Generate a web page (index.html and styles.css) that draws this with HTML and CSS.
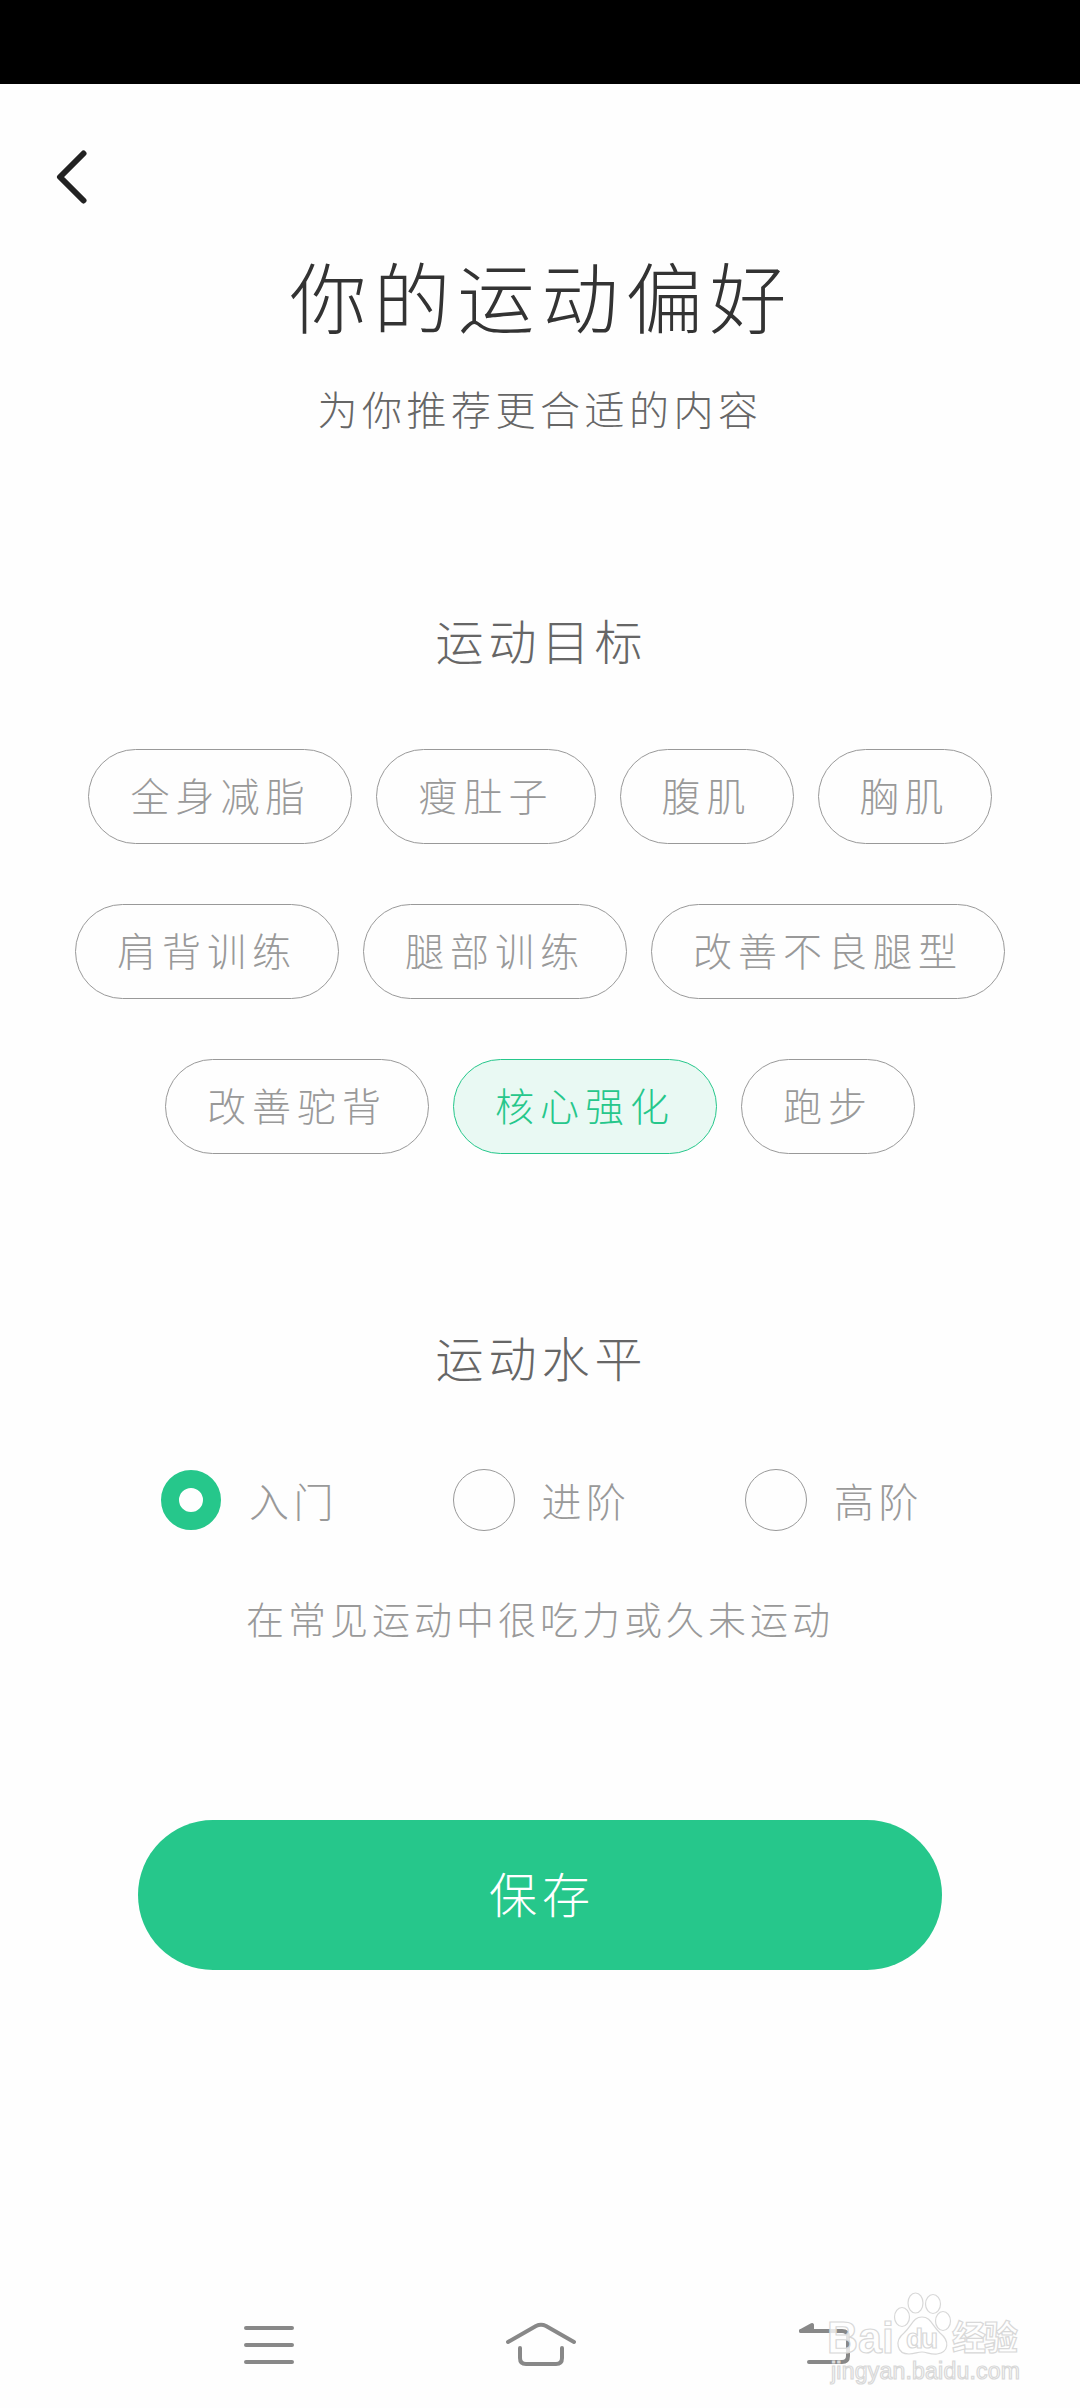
FILE: index.html
```html
<!DOCTYPE html>
<html lang="zh-CN">
<head>
  <meta charset="UTF-8">
  <meta name="viewport" content="width=device-width, initial-scale=1.0">
  <title>你的运动偏好</title>
  <link rel="stylesheet" href="styles.css">
</head>
<body>
  <div class="status-bar"></div>
  <header class="top-bar">
    <button class="back" aria-label="返回">
      <svg width="32" height="56" viewBox="0 0 32 56">
        <path d="M27.5 4.5 L4 28 L27.5 51.5" fill="none" stroke="#222" stroke-width="6" stroke-linecap="round" stroke-linejoin="round"/>
      </svg>
    </button>
  </header>

  <main>
    <h1>你的运动偏好</h1>
    <p class="subtitle">为你推荐更合适的内容</p>

    <h2 class="goal-title">运动目标</h2>
    <div class="chips">
      <div class="chip-row">
        <button class="chip">全身减脂</button>
        <button class="chip">瘦肚子</button>
        <button class="chip">腹肌</button>
        <button class="chip">胸肌</button>
      </div>
      <div class="chip-row">
        <button class="chip">肩背训练</button>
        <button class="chip">腿部训练</button>
        <button class="chip">改善不良腿型</button>
      </div>
      <div class="chip-row">
        <button class="chip">改善驼背</button>
        <button class="chip active">核心强化</button>
        <button class="chip">跑步</button>
      </div>
    </div>

    <h2 class="level-title">运动水平</h2>
    <div class="levels">
      <div class="level"><span class="radio checked"></span><span>入门</span></div>
      <div class="level"><span class="radio"></span><span>进阶</span></div>
      <div class="level"><span class="radio"></span><span>高阶</span></div>
    </div>
    <p class="hint">在常见运动中很吃力或久未运动</p>

    <button class="save">保存</button>
  </main>

  <nav class="nav-bar">
    <svg width="54" height="46" viewBox="0 0 54 46">
      <path d="M4 6H50M4 23H50M4 40H50"/>
    </svg>
    <svg width="74" height="46" viewBox="0 0 74 46">
      <path d="M4 20 L32 4 Q37 1.5 42 4 L70 20"/>
      <path d="M16 26V36Q16 42 22 42H52Q58 42 58 36V26"/>
    </svg>
    <svg width="54" height="46" viewBox="0 0 54 46">
      <path d="M4 9H45Q51 9 51 15V34Q51 40 45 40H12"/>
      <path class="solid" d="M4 9L15 3V9Z"/>
    </svg>
  </nav>

  <svg class="watermark" width="210" height="100" viewBox="0 0 210 100">
    <g class="mark">
      <text class="logo" x="5" y="63" textLength="67" lengthAdjust="spacingAndGlyphs">Bai</text>
      <ellipse cx="80" cy="27" rx="7.5" ry="9.5"/>
      <ellipse cx="93.5" cy="13" rx="7.5" ry="10"/>
      <ellipse cx="111" cy="14" rx="7.5" ry="9.5"/>
      <ellipse cx="121" cy="31" rx="7.5" ry="9.5"/>
      <path d="M100 27C91 27 90 36 82 43C72 51 75 64 87 64C93 64 95 62 100 62C105 62 109 65 115 64C127 62 128 51 118 43C110 36 109 27 100 27Z"/>
      <text class="du" x="84" y="58" textLength="32">du</text>
      <text class="cn" x="130" y="60" textLength="66">经验</text>
      <text class="url" x="9" y="89" textLength="189">jingyan.baidu.com</text>
    </g>
  </svg>
</body>
</html>
```

FILE: styles.css
```css
* {
  box-sizing: border-box;
}

body {
  margin: 0;
  height: 2408px;
  position: relative;
  display: flex;
  flex-direction: column;
  background-color: #fefefe;
  font-family: "Noto Sans CJK SC", sans-serif;
  font-weight: 300;
  color: #999;
}

h1, h2, p {
  margin: 0;
  font-weight: 300;
  text-align: center;
}

button {
  padding: 0;
  border: none;
  background: none;
  font: inherit;
  color: inherit;
}

svg {
  display: block;
}

.status-bar {
  height: 84px;
  background-color: #000;
}

.top-bar {
  height: 151px;
  padding: 65px 56px 0;
}

main {
  flex: 1;
  display: flex;
  flex-direction: column;
}

h1 {
  height: 120px;
  line-height: 120px;
  font-size: 77px;
  letter-spacing: 7px;
  text-indent: 3px;
  color: #333;
}

.subtitle {
  margin-top: 23px;
  height: 60px;
  line-height: 60px;
  font-size: 40px;
  letter-spacing: 4.5px;
  color: #666;
}

h2 {
  height: 80px;
  line-height: 80px;
  font-size: 48px;
  letter-spacing: 5px;
  text-indent: 3px;
  color: #666;
}

.goal-title {
  margin-top: 161px;
}

.chips {
  margin-top: 70px;
  display: flex;
  flex-direction: column;
  gap: 60px;
}

.chip-row {
  display: flex;
  justify-content: center;
  gap: 24px;
}

.chip {
  height: 95px;
  padding: 0 41px 6px;
  border: 1px solid #999;
  border-radius: 48px;
  font-size: 39px;
  letter-spacing: 6px;
}

.chip.active {
  border-color: #26c78b;
  background-color: #e9f9f3;
  color: #26c78b;
}

.level-title {
  margin-top: 162px;
}

.levels {
  margin-top: 73px;
  padding-left: 160px;
  display: grid;
  grid-template-columns: repeat(3, 292.5px);
}

.level {
  display: flex;
  align-items: center;
  gap: 27px;
  height: 62px;
  line-height: 58px;
  font-size: 40px;
  letter-spacing: 4.5px;
}

.radio {
  width: 62px;
  height: 62px;
  border: 1px solid #999;
  border-radius: 50%;
}

.radio.checked {
  border: 18px solid #26c78b;
  width: 60px;
  height: 60px;
  margin: 0 1px;
}

.hint {
  margin-top: 57px;
  height: 60px;
  line-height: 60px;
  font-size: 38px;
  letter-spacing: 4px;
}

.save {
  margin: 172px auto 0;
  padding: 0 0 6px 4px;
  width: 804px;
  height: 150px;
  border-radius: 75px;
  background-color: #26c78b;
  color: #fff;
  font-size: 48px;
  letter-spacing: 5px;
}

.nav-bar {
  height: 86px;
  padding-left: 242px;
  display: flex;
  gap: 211px;
}

.nav-bar svg {
  fill: none;
  stroke: #888;
  stroke-width: 4;
  stroke-linecap: round;
  stroke-linejoin: round;
}

.nav-bar svg:first-child {
  margin-right: -3px;
}

.nav-bar svg:last-child {
  margin-left: 8px;
}

.nav-bar .solid {
  fill: #888;
}

/* sits on top of the nav bar */
.watermark {
  position: absolute;
  left: 822px;
  top: 2290px;
}

.mark {
  fill: #fff;
  fill-opacity: 0.8;
  stroke: #d8d8d8;
  stroke-width: 1.2;
}

.logo {
  font: 700 44px "Liberation Sans", sans-serif;
}

.du {
  font: 700 28px "Liberation Sans", sans-serif;
}

.cn {
  font: 700 34px "Noto Sans CJK SC", sans-serif;
}

.url {
  font: 400 23px "Liberation Sans", sans-serif;
}
```
